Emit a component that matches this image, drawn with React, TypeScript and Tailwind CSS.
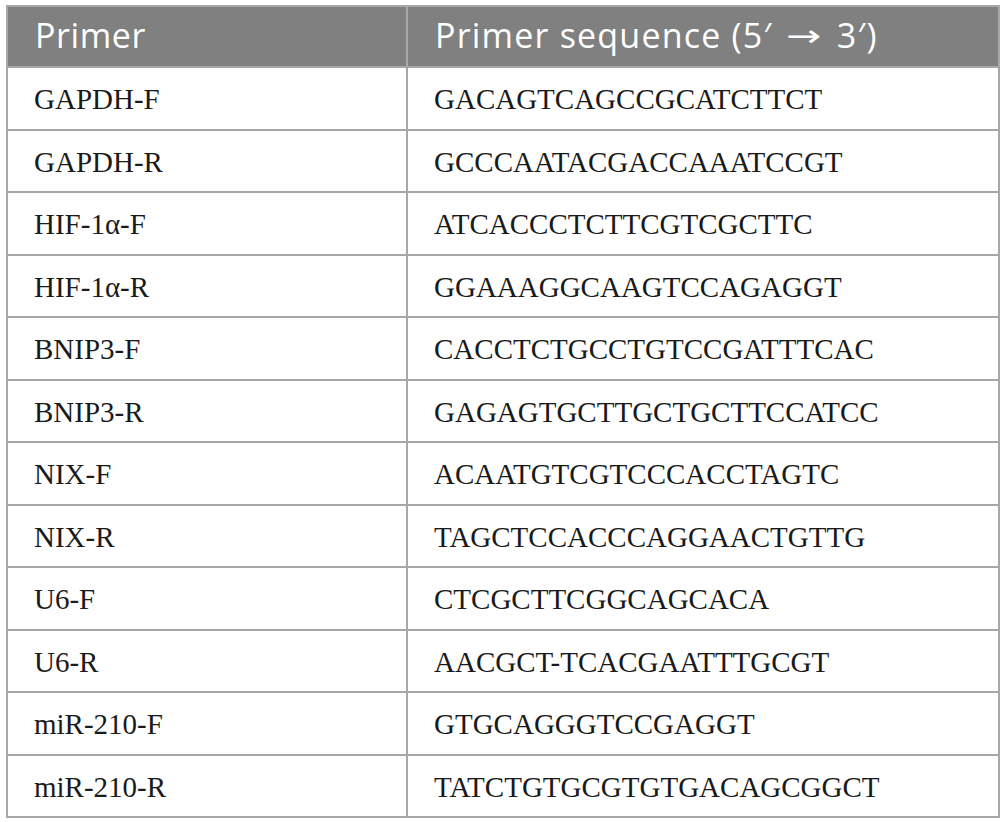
import React from "react";

const rows: [string, string][] = [
  ["GAPDH-F", "GACAGTCAGCCGCATCTTCT"],
  ["GAPDH-R", "GCCCAATACGACCAAATCCGT"],
  ["HIF-1α-F", "ATCACCCTCTTCGTCGCTTC"],
  ["HIF-1α-R", "GGAAAGGCAAGTCCAGAGGT"],
  ["BNIP3-F", "CACCTCTGCCTGTCCGATTTCAC"],
  ["BNIP3-R", "GAGAGTGCTTGCTGCTTCCATCC"],
  ["NIX-F", "ACAATGTCGTCCCACCTAGTC"],
  ["NIX-R", "TAGCTCCACCCAGGAACTGTTG"],
  ["U6-F", "CTCGCTTCGGCAGCACA"],
  ["U6-R", "AACGCT-TCACGAATTTGCGT"],
  ["miR-210-F", "GTGCAGGGTCCGAGGT"],
  ["miR-210-R", "TATCTGTGCGTGTGACAGCGGCT"],
];

export default function App() {
  return (
    <div className="w-[1006px] h-[822px] bg-white pt-[5px] pl-[6px]">
      <div className="w-[994px] bg-[#a7a7a7] p-[2px] grid grid-cols-[398px_1fr] gap-[2px]">
        <div className="h-[59px] bg-[#808080] flex items-center pl-[27px] text-white text-[34px] tracking-[0.6px] font-['Open_Sans',sans-serif] pb-[2px]">
          Primer
        </div>
        <div className="h-[59px] bg-[#808080] flex items-center pl-[27px] text-white text-[34px] tracking-[1.2px] font-['Open_Sans',sans-serif] pb-[2px] whitespace-nowrap">
          Primer sequence (5′
          <span className="inline-block mx-[19px] font-['DejaVu_Sans',sans-serif] text-[30px] scale-x-[1.4]">→</span>
          3′)
        </div>
        {rows.map(([a, b]) => (
          <React.Fragment key={a}>
            <div className="h-[60.5px] bg-white flex items-center pl-[26px] pt-[3px] text-[#1a1a1a] text-[29px] font-['Liberation_Serif',serif]">
              {a}
            </div>
            <div className="h-[60.5px] bg-white flex items-center pl-[26px] pt-[3px] text-[#1a1a1a] text-[29px] font-['Liberation_Serif',serif]">
              {b}
            </div>
          </React.Fragment>
        ))}
      </div>
    </div>
  );
}
